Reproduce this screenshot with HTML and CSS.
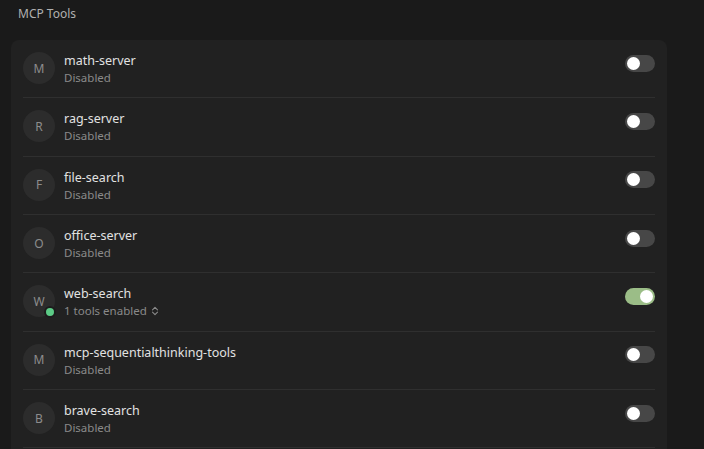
FILE: index.html
```html
<!DOCTYPE html>
<html>
<head>
<meta charset="utf-8">
<link rel="stylesheet" href="styles.css">
</head>
<body>
<div class="page">
  <div class="title">MCP Tools</div>
  <div class="card">
    <div class="row">
      <div class="avatar">M</div>
      <div class="info"><div class="name">math-server</div><div class="status">Disabled</div></div>
      <div class="toggle"><span class="knob"></span></div>
    </div>
    <div class="row">
      <div class="avatar">R</div>
      <div class="info"><div class="name">rag-server</div><div class="status">Disabled</div></div>
      <div class="toggle"><span class="knob"></span></div>
    </div>
    <div class="row">
      <div class="avatar">F</div>
      <div class="info"><div class="name">file-search</div><div class="status">Disabled</div></div>
      <div class="toggle"><span class="knob"></span></div>
    </div>
    <div class="row">
      <div class="avatar">O</div>
      <div class="info"><div class="name">office-server</div><div class="status">Disabled</div></div>
      <div class="toggle"><span class="knob"></span></div>
    </div>
    <div class="row">
      <div class="avatar">W<span class="dot"></span></div>
      <div class="info"><div class="name">web-search</div><div class="status">1 tools enabled
        <svg class="updown" width="8" height="10" viewBox="0 0 8 10"><path d="M1.5 3.8 L4 1.3 L6.5 3.8 M1.5 6.2 L4 8.7 L6.5 6.2" fill="none" stroke="currentColor" stroke-width="1.1" stroke-linecap="round" stroke-linejoin="round"/></svg></div></div>
      <div class="toggle on"><span class="knob"></span></div>
    </div>
    <div class="row">
      <div class="avatar">M</div>
      <div class="info"><div class="name">mcp-sequentialthinking-tools</div><div class="status">Disabled</div></div>
      <div class="toggle"><span class="knob"></span></div>
    </div>
    <div class="row">
      <div class="avatar">B</div>
      <div class="info"><div class="name">brave-search</div><div class="status">Disabled</div></div>
      <div class="toggle"><span class="knob"></span></div>
    </div>
  </div>
</div>
</body>
</html>
```

FILE: styles.css
```css
html, body {
  margin: 0;
  padding: 0;
  background: #1a1a1a;
  height: 100%;
  overflow: hidden;
}
body {
  font-family: "Noto Sans", "Open Sans", sans-serif;
  color: #e0e0e0;
}
.page {
  padding: 0 37px 0 11px;
}
.title {
  font-size: 12px;
  color: #b0b0b0;
  padding: 5px 0 0 7px;
  height: 40px;
  box-sizing: border-box;
}
.card {
  background: #212121;
  border-radius: 8px;
  padding: 0 12px 20px;
}
.row {
  display: flex;
  align-items: center;
  height: 58.33px;
  box-sizing: border-box;
  border-bottom: 1px solid #2f2f2f;
  padding-bottom: 1px;
}
.avatar {
  position: relative;
  width: 32px;
  height: 32px;
  border-radius: 50%;
  background: #2c2c2c;
  color: #8c8c8c;
  font-size: 12px;
  display: flex;
  align-items: center;
  justify-content: center;
  flex-shrink: 0;
}
.dot {
  position: absolute;
  right: -1px;
  bottom: -1px;
  width: 8px;
  height: 8px;
  border-radius: 50%;
  background: #5ccb86;
  border: 2px solid #1c1c1c;
}
.info {
  flex: 1;
  margin-left: 9px;
  margin-top: 2px;
}
.name {
  font-size: 12.5px;
  line-height: 17px;
  color: #e2e2e2;
}
.status {
  font-size: 11.5px;
  line-height: 17px;
  color: #8a8a8a;
  display: flex;
  align-items: center;
  gap: 4px;
}
.updown {
  color: #8a8a8a;
}
.toggle {
  width: 30px;
  height: 17px;
  border-radius: 9px;
  background: #474747;
  display: flex;
  align-items: center;
  padding: 0 2px;
  box-sizing: border-box;
  flex-shrink: 0;
  margin-bottom: 10px;
}
.knob {
  width: 13px;
  height: 13px;
  border-radius: 50%;
  background: #ffffff;
}
.toggle.on {
  background: #9bbd87;
  justify-content: flex-end;
}
```
